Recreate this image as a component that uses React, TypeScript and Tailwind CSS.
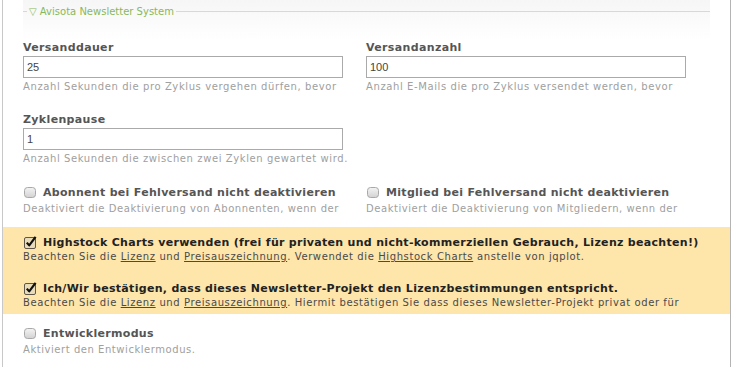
import type { ReactNode } from "react";

function Box({ checked }: { checked?: boolean }) {
  if (checked) {
    return (
      <svg width="13" height="13" viewBox="0 0 13 13" className="shrink-0">
        <rect x="0.5" y="1.5" width="11" height="11" rx="1.5" fill="#e9dcbb" stroke="#5f574a" />
        <path d="M2.8 6.6 L5.2 9.4 L11.6 0.8" fill="none" stroke="#111" strokeWidth="2.2" strokeLinejoin="round" />
      </svg>
    );
  }
  return (
    <svg width="13" height="13" viewBox="0 0 13 13" className="shrink-0">
      <defs>
        <linearGradient id="cbg" x1="0" y1="0" x2="0" y2="1">
          <stop offset="0" stopColor="#f4f4f4" />
          <stop offset="1" stopColor="#d2d2d2" />
        </linearGradient>
      </defs>
      <rect x="0.5" y="1.5" width="11" height="10" rx="3" fill="url(#cbg)" stroke="#a8a8a8" />
    </svg>
  );
}

function TextField({ label, value, help }: { label: string; value: string; help: string }) {
  return (
    <div>
      <div className="h-[14px] text-[11px] leading-[14px] font-bold tracking-[0.35px] text-[#555]">{label}</div>
      <div className="mt-[1px] flex h-[22px] w-[320px] items-center border border-[#aaa] bg-white pl-[3px] font-['Liberation_Sans',Arial,sans-serif] text-[11px] text-[#444]">
        {value}
      </div>
      <div className="mt-[2px] whitespace-nowrap text-[10px] leading-[13px] tracking-[0.6px] text-[#a0a0a0]">{help}</div>
    </div>
  );
}

function CheckField({
  label,
  help,
  checked,
  strong,
}: {
  label: string;
  help: ReactNode;
  checked?: boolean;
  strong?: boolean;
}) {
  return (
    <div>
      <div className="flex h-[14px] items-start">
        <div className="ml-[1px] mr-[7px] w-[12px]">
          <Box checked={checked} />
        </div>
        <span
          className={`whitespace-nowrap text-[11px] leading-[14px] font-bold tracking-[0.3px] ${strong ? "text-[#222]" : "text-[#555]"}`}
        >
          {label}
        </span>
      </div>
      <div
        className={`whitespace-nowrap text-[10px] leading-[13px] ${strong ? "tracking-[0.6px] text-[#4a4a4a]" : "mt-[2px] tracking-[0.55px] text-[#a0a0a0]"}`}
      >
        {help}
      </div>
    </div>
  );
}

export default function App() {
  return (
    <div className="h-[367px] w-[732px] overflow-hidden bg-white font-['DejaVu_Sans',Verdana,sans-serif]">
      <div className="ml-[2px] h-full w-[729px] border-l border-r border-l-[#c8c8c8] border-r-[#b4b4b4]">
        <div className="pl-[20px]">
          {/* legend */}
          <div className="h-[40px] w-[687px] bg-gradient-to-b from-[#f6f6f6] to-white pt-[5px]">
            <div className="flex h-[13px] items-center">
              <div className="h-px w-[4px] bg-[#d8d8d8]" />
              <span className="px-[2px] text-[10px] leading-[13px] text-[#8ab858]">▽ Avisota Newsletter System</span>
              <div className="h-px flex-1 bg-[#d8d8d8]" />
            </div>
          </div>

          <div className="mt-[1px] grid grid-cols-[343px_1fr]">
            <TextField label="Versanddauer" value="25" help="Anzahl Sekunden die pro Zyklus vergehen dürfen, bevor" />
            <TextField label="Versandanzahl" value="100" help="Anzahl E-Mails die pro Zyklus versendet werden, bevor" />
          </div>

          <div className="mt-[20px]">
            <TextField label="Zyklenpause" value="1" help="Anzahl Sekunden die zwischen zwei Zyklen gewartet wird." />
          </div>

          <div className="mt-[21px] grid grid-cols-[343px_1fr]">
            <CheckField
              label="Abonnent bei Fehlversand nicht deaktivieren"
              help="Deaktiviert die Deaktivierung von Abonnenten, wenn der"
            />
            <CheckField
              label="Mitglied bei Fehlversand nicht deaktivieren"
              help="Deaktiviert die Deaktivierung von Mitgliedern, wenn der"
            />
          </div>
        </div>

        {/* license box */}
        <div className="mt-[12px] bg-[#fee5aa] pb-[5px] pl-[20px] pt-[9px]">
          <CheckField
            checked
            strong
            label="Highstock Charts verwenden (frei für privaten und nicht-kommerziellen Gebrauch, Lizenz beachten!)"
            help={
              <>
                Beachten Sie die <u>Lizenz</u> und <u>Preisauszeichnung</u>. Verwendet die <u>Highstock Charts</u> anstelle von jqplot.
              </>
            }
          />
          <div className="mt-[19px]">
            <CheckField
              checked
              strong
              label="Ich/Wir bestätigen, dass dieses Newsletter-Projekt den Lizenzbestimmungen entspricht."
              help={
                <>
                  Beachten Sie die <u>Lizenz</u> und <u>Preisauszeichnung</u>. Hiermit bestätigen Sie dass dieses Newsletter-Projekt privat oder für
                </>
              }
            />
          </div>
        </div>

        <div className="mt-[13px] pl-[20px]">
          <CheckField label="Entwicklermodus" help="Aktiviert den Entwicklermodus." />
        </div>
      </div>
    </div>
  );
}
